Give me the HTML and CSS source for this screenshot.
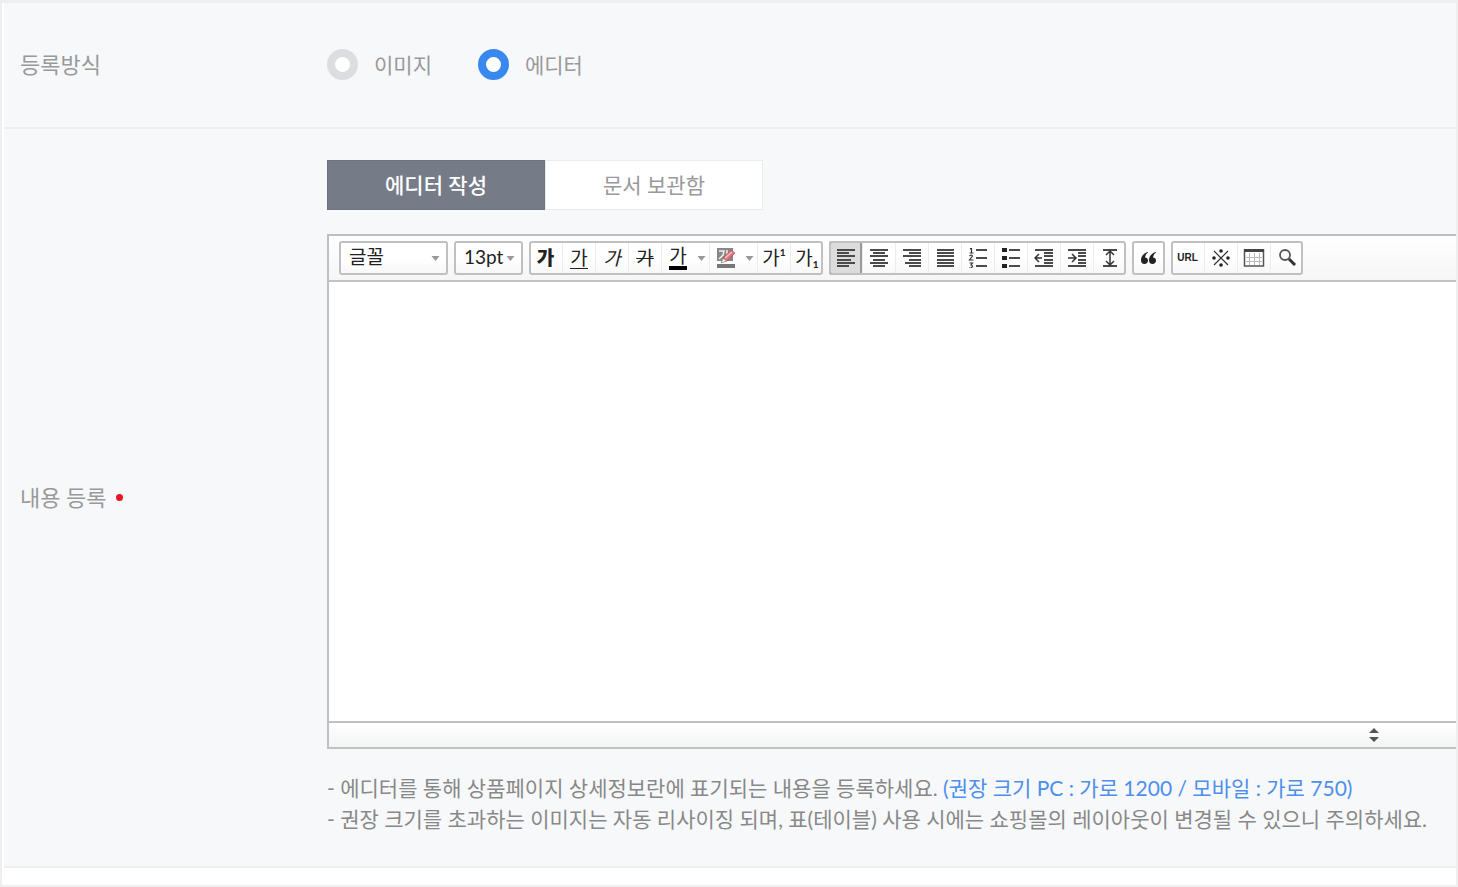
FILE: index.html
```html
<!DOCTYPE html>
<html lang="ko">
<head>
<meta charset="utf-8">
<title>내용 등록</title>
<link rel="stylesheet" href="styles.css">
</head>
<body>
<form class="form">
  <div class="row row-method">
    <div class="row-label" id="method-label">등록방식</div>
    <div class="row-field radios" role="radiogroup" aria-labelledby="method-label">
      <label class="radio"><input type="radio" name="method" value="image"><span>이미지</span></label>
      <label class="radio"><input type="radio" name="method" value="editor" checked><span>에디터</span></label>
    </div>
  </div>
  <div class="row row-content">
    <label class="row-label" for="content">내용 등록 <span class="required"></span></label>
    <div class="row-field">
      <div class="tabs">
        <button type="button" class="tab tab-active">에디터 작성</button>
        <button type="button" class="tab">문서 보관함</button>
      </div>
      <div class="editor">
        <div class="toolbar">
          <div class="picker picker-font">
            <select aria-label="글꼴"><option>글꼴</option></select>
            <svg class="caret" viewBox="0 0 8 5"><path d="M0 0h8L4 5z"/></svg>
          </div>
          <div class="picker picker-size">
            <select aria-label="글자 크기"><option>13pt</option></select>
            <svg class="caret" viewBox="0 0 8 5"><path d="M0 0h8L4 5z"/></svg>
          </div>
          <div class="group">
            <button type="button" class="tool bold" aria-label="굵게">가</button>
            <button type="button" class="tool" aria-label="밑줄"><span class="underline">가</span></button>
            <button type="button" class="tool italic" aria-label="기울임">가</button>
            <button type="button" class="tool strike" aria-label="취소선">가</button>
            <button type="button" class="tool" aria-label="글자색"><span class="color">가</span></button>
            <button type="button" class="tool tool-drop" aria-label="글자색 선택"><svg class="caret" viewBox="0 0 8 5"><path d="M0 0h8L4 5z"/></svg></button>
            <button type="button" class="tool" aria-label="배경색"><svg class="icon" viewBox="0 0 20 20"><path fill="#888" d="M1 0h16v13H1z"/><path d="M3 3h5l-1 4-4 4M11 2v10M11 6h3" fill="none" stroke="#eee" stroke-width="1.5"/><path fill="#777" d="M1 16h18v4H1z"/><path fill="#e8727a" stroke="#984950" stroke-width=".6" d="M15 2l4 3-8 8-4-3z"/><path fill="#f8e4cf" stroke="#655" stroke-width=".5" d="M7 10l4 3-6 2z"/><path stroke="#ffc2c5" stroke-width="1.2" d="M9 10l7-6"/></svg></button>
            <button type="button" class="tool tool-drop" aria-label="배경색 선택"><svg class="caret" viewBox="0 0 8 5"><path d="M0 0h8L4 5z"/></svg></button>
            <button type="button" class="tool" aria-label="위첨자">가<sup>1</sup></button>
            <button type="button" class="tool" aria-label="아래첨자">가<sub>1</sub></button>
          </div>
          <div class="group">
            <button type="button" class="tool pressed" aria-label="왼쪽 정렬"><svg class="icon" viewBox="0 0 20 20"><path class="line" d="M1 2h18M1 5h12M1 8h18M1 12h14M1 15h18M1 18h12"/></svg></button>
            <button type="button" class="tool" aria-label="가운데 정렬"><svg class="icon" viewBox="0 0 20 20"><path class="line" d="M1 2h18M4 5h12M1 8h18M4 12h12M1 15h18M4 18h12"/></svg></button>
            <button type="button" class="tool" aria-label="오른쪽 정렬"><svg class="icon" viewBox="0 0 20 20"><path class="line" d="M1 2h18M7 5h12M1 8h18M7 12h12M3 15h16M7 18h12"/></svg></button>
            <button type="button" class="tool" aria-label="양쪽 정렬"><svg class="icon" viewBox="0 0 20 20"><path class="line" d="M2 2h17M2 5h17M2 8h17M2 12h17M2 15h17M2 18h17"/></svg></button>
            <button type="button" class="tool" aria-label="번호 매기기"><svg class="icon" viewBox="0 0 20 20"><path class="line" d="M8 2h11M8 10h11M8 18h11"/><path class="stroke thin" d="M2 1l1.500-1v5M1.500 5h4M1.500 8q2-2 3 0l-3 4h4M1.500 15h3l-1.500 2q3 1 0 3H1"/></svg></button>
            <button type="button" class="tool" aria-label="글머리 기호"><svg class="icon" viewBox="0 0 20 20"><path fill="#222" d="M1 0h5v4H1zM1 8h5v4H1zM1 16h5v4H1z"/><path class="line" d="M8 2h11M8 10h11M8 18h11"/></svg></button>
            <button type="button" class="tool" aria-label="내어쓰기"><svg class="icon" viewBox="0 0 20 20"><path class="line" d="M1 2h18M10 5h9M10 8h9M10 12h9M10 15h9M1 18h18"/><path class="stroke" d="M8 10H1M5 6l-4 4 4 4"/></svg></button>
            <button type="button" class="tool" aria-label="들여쓰기"><svg class="icon" viewBox="0 0 20 20"><path class="line" d="M1 2h18M11 5h8M11 8h8M11 12h8M11 15h8M1 18h18"/><path class="stroke" d="M1 10h7M5 6l4 4-4 4"/></svg></button>
            <button type="button" class="tool" aria-label="줄 간격"><svg class="icon" viewBox="0 0 20 20"><path class="line" d="M3 2h14M3 18h14"/><path class="stroke" d="M10 3v14M6 7l4-4 4 4M6 13l4 4 4-4"/></svg></button>
          </div>
          <div class="group">
            <button type="button" class="tool" aria-label="인용구"><svg class="icon" viewBox="0 0 20 20"><path fill="#222" d="M9 4C5 5 2 8 2 12c0 3 1.500 4 3.500 4S9 14.500 9 12.500 7.500 9.500 6 9.500c.2-2 1.200-3.800 3-5zM17 4c-4 1-7 4-7 8 0 3 1.500 4 3.500 4s3.500-1.500 3.500-3.500-1.500-3-3-3c.2-2 1.200-3.800 3-5z"/></svg></button>
          </div>
          <div class="group">
            <button type="button" class="tool url">URL</button>
            <button type="button" class="tool" aria-label="특수기호"><svg class="icon" viewBox="0 0 20 20"><path class="stroke thin" d="M3 3l14 14M17 3L3 17"/><g fill="#222"><circle cx="10" cy="3" r="1.800"/><circle cx="10" cy="17" r="1.800"/><circle cx="3" cy="10" r="1.800"/><circle cx="17" cy="10" r="1.800"/></g></svg></button>
            <button type="button" class="tool" aria-label="표"><svg class="icon icon-wide" viewBox="0 0 22 20"><path fill="#fff" stroke="#555" stroke-width="1.500" d="M1.500 2h19v16h-19z"/><path stroke="#bbb" d="M6.500 5v12M11.500 5v12M16.500 5v12M3 9.500h16M3 13.500h16"/><path fill="#444" d="M1 1h20v3H1z"/></svg></button>
            <button type="button" class="tool" aria-label="찾기"><svg class="icon" viewBox="0 0 20 20"><circle cx="8" cy="7" r="5" fill="#fff" stroke="#555" stroke-width="1.800"/><path stroke="#333" stroke-width="3" d="M12 11l6 6"/></svg></button>
          </div>
        </div>
        <textarea class="canvas" id="content"></textarea>
        <div class="editor-foot">
          <button type="button" class="resize" aria-label="입력창 크기 조절"><svg viewBox="0 0 10 14"><path fill="#555" d="M0 5l5-5 5 5zM0 9h10l-5 5z"/></svg></button>
        </div>
      </div>
      <ul class="help">
        <li>- 에디터를 통해 상품페이지 상세정보란에 표기되는 내용을 등록하세요. <span class="help-size">(권장 크기 PC : 가로 1200 / 모바일 : 가로 750)</span></li>
        <li>- 권장 크기를 초과하는 이미지는 자동 리사이징 되며, 표(테이블) 사용 시에는 쇼핑몰의 레이아웃이 변경될 수 있으니 주의하세요.</li>
      </ul>
    </div>
  </div>
</form>
</body>
</html>
```
FILE: styles.css
```css
* {
  box-sizing: border-box;
}

body {
  margin: 0;
  background: #fff;
  color: #999;
  font-family: Lato, "Noto Sans CJK KR", sans-serif;
  font-size: 21px;
  line-height: 31px;
}

button,
select,
textarea {
  margin: 0;
  padding: 0;
  border: 0;
  border-radius: 0;
  background: none;
  color: inherit;
  font: inherit;
}

.form {
  padding-bottom: 17px;
  border: 2px solid #efeff0;
  border-top-width: 3px;
  overflow: hidden;
}

.row {
  display: grid;
  grid-template-columns: 307px minmax(0, 1fr);
  align-items: center;
  margin-left: 2px;
  padding-left: 16px;
  background: #f7f8fa;
  border-bottom: 2px solid #eeeff1;
}

.row-method {
  min-height: 126px;
  padding-bottom: 2px;
}

.row-content {
  padding-top: 31px;
  padding-bottom: 31px;
}

.row-label {
  display: flex;
  align-items: center;
  gap: 9px;
  font-size: 22px;
}

.required {
  width: 7px;
  height: 7px;
  border-radius: 50%;
  background: #e81525;
}

.radios {
  display: flex;
  gap: 46px;
}

.radio {
  display: flex;
  align-items: center;
  gap: 16px;
}

.radio input {
  appearance: none;
  width: 31px;
  height: 31px;
  margin: 0;
  border: 8px solid #dcdde0;
  border-radius: 50%;
  background: #fff;
}

.radio input:checked {
  border-color: #3888ef;
}

.tabs {
  display: flex;
  margin-bottom: 24px;
}

.tab {
  width: 218px;
  height: 50px;
  padding-bottom: 2px;
  border: 1px solid #ebecee;
  background: #fff;
}

.tab-active {
  border-color: #6d7480;
  background: #757b87;
  color: #fff;
  font-weight: 500;
}

.editor {
  border: 2px solid #bfc1c1;
  border-right: 0;
  background: #fff;
}

.toolbar {
  display: flex;
  gap: 6px;
  padding: 5px 10px;
  border-bottom: 2px solid #c2c3c3;
  background: linear-gradient(#fff, #f6f6f6);
  color: #222;
}

.picker,
.group {
  height: 34px;
  border-radius: 3px;
  outline: 2px solid #c0c0c0;
  outline-offset: -2px;
  background: linear-gradient(#fff 50%, #f7f7f7);
}

.picker {
  display: grid;
  align-items: center;
}

.picker > * {
  grid-area: 1 / 1;
}

.picker-font {
  width: 109px;
}

.picker-size {
  width: 69px;
}

.picker select {
  appearance: none;
  width: 100%;
  height: 34px;
  padding: 0 0 3px 10px;
  font-size: 19px;
}

.caret {
  width: 9px;
  height: 5px;
  fill: #999;
}

.picker .caret {
  justify-self: end;
  margin-right: 8px;
  pointer-events: none;
}

.group {
  display: flex;
}

.tool {
  display: flex;
  align-items: center;
  justify-content: center;
  width: 33px;
  height: 34px;
  font-size: 19px;
  line-height: 20px;
}

.tool + .tool {
  border-left: 1px solid #ececec;
}

.tool + .tool-drop {
  width: 15px;
  border-left: 0;
}

.pressed {
  border: 2px solid #999;
  border-radius: 3px 0 0 3px;
  outline: 1px solid #999;
  outline-offset: -1px;
  background: #dcdcdc;
}

.bold {
  font-weight: 900;
}

.underline {
  border-bottom: 1px solid #222;
}

.italic {
  font-style: italic;
}

.strike {
  text-decoration: line-through;
}

.color {
  border-bottom: 4px solid #000;
}

.tool sup,
.tool sub {
  font-size: 10px;
  font-weight: 700;
  line-height: 10px;
}

.tool sup {
  align-self: flex-start;
  margin-top: 6px;
}

.tool sub {
  align-self: flex-end;
  margin-bottom: 6px;
}

.url {
  font-family: "Liberation Sans", sans-serif;
  font-size: 10px;
  font-weight: 700;
}

.icon {
  flex: none;
  width: 20px;
  height: 20px;
}

.icon-wide {
  width: 22px;
}

.line {
  fill: none;
  stroke: #4a4a4a;
  stroke-width: 2;
}

.stroke {
  fill: none;
  stroke: #333;
  stroke-width: 1.5;
}

.thin {
  stroke-width: 1.2;
}

.canvas {
  display: block;
  width: 100%;
  height: 439px;
  padding: 12px;
  resize: none;
  color: #222;
}

.editor-foot {
  display: flex;
  justify-content: flex-end;
  padding: 5px 77px 5px 0;
  border-top: 2px solid #bfc1c1;
  background: linear-gradient(#fff, #f4f4f4);
}

.resize {
  display: flex;
  width: 10px;
  height: 14px;
}

.help {
  margin: 23px 0 0;
  padding: 0 0 1px;
  list-style: none;
  color: #888;
  white-space: nowrap;
}

.help-size {
  color: #4d8fec;
}
```
